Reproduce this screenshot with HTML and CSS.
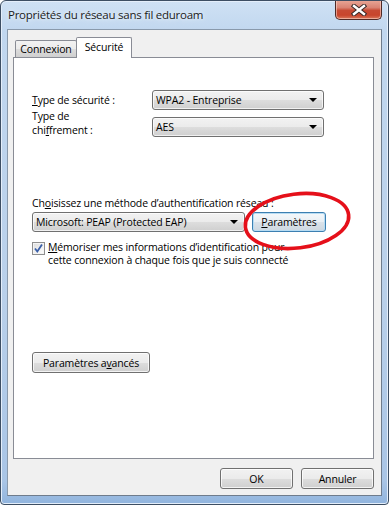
FILE: index.html
```html
<!DOCTYPE html>
<html lang="fr">
<head>
<meta charset="utf-8">
<title>Propriétés du réseau sans fil eduroam</title>
<link rel="stylesheet" href="styles.css">
</head>
<body>
<div class="window">
  <div class="titlebar">
    <span class="title">Propriétés du réseau sans fil eduroam</span>
    <div class="close">
      <svg width="16" height="12" viewBox="0 0 16 12">
        <path d="M3 2 L13 10 M13 2 L3 10" stroke="#3a2a28" stroke-width="4.4" stroke-linecap="square" fill="none"/>
        <path d="M3 2 L13 10 M13 2 L3 10" stroke="#ffffff" stroke-width="2.4" stroke-linecap="square" fill="none"/>
      </svg>
    </div>
  </div>
  <div class="client">
    <div class="tabs">
      <div class="tab">Connexion</div>
      <div class="tab active">Sécurité</div>
    </div>
    <div class="panel">
      <div class="row row1">
        <span class="label"><u>T</u>ype de sécurité :</span>
        <div class="combo wide"><span>WPA2 - Entreprise</span><i class="arrow"></i></div>
      </div>
      <div class="row row2">
        <span class="label two">Type de<br>chi<u>f</u>frement :</span>
        <div class="combo wide"><span>AES</span><i class="arrow"></i></div>
      </div>
      <div class="method-label">Ch<u>o</u>isissez une méthode d’authentification réseau :</div>
      <div class="row row4">
        <div class="combo method"><span>Microsoft: PEAP (Protected EAP)</span><i class="arrow"></i></div>
        <div class="btn focus params"><u>P</u>aramètres</div>
      </div>
      <div class="check-row">
        <span class="checkbox">
          <svg width="11" height="11" viewBox="0 0 11 11"><path d="M2 5.5 L4.3 8.5 L9 1.5" stroke="#3a5fa8" stroke-width="1.8" fill="none"/></svg>
        </span>
        <span class="check-text"><u>M</u>émoriser mes informations d’identification pour<br>cette connexion à chaque fois que je suis connecté</span>
      </div>
      <div class="btn advanced">Paramètres a<u>v</u>ancés</div>
    </div>
    <div class="footer">
      <div class="btn footer-btn">OK</div>
      <div class="btn footer-btn">Annuler</div>
    </div>
  </div>
  <svg class="annotation" width="389" height="505" viewBox="0 0 389 505">
    <ellipse cx="297" cy="221" rx="52" ry="27" transform="rotate(-7 297 221)" fill="none" stroke="#e5101a" stroke-width="3.6"/>
  </svg>
</div>
</body>
</html>
```
FILE: styles.css
```css
html, body {
  margin: 0;
  padding: 0;
  background: #ffffff;
}
body {
  font-family: "Open Sans", "Noto Sans", "DejaVu Sans", sans-serif;
  font-size: 10.5px;
  letter-spacing: -0.15px;
  color: #000;
}
u {
  text-decoration: underline;
  text-underline-offset: 1px;
}
.window {
  position: relative;
  width: 389px;
  height: 505px;
  box-sizing: border-box;
  border: 1px solid #3d4e63;
  border-radius: 6px 6px 4px 4px;
  background: linear-gradient(to bottom, #cfe1f4 0px, #c1d7ef 30px, #b9d0ea 300px, #a9c5e6 480px, #8fb3dd 505px);
  box-shadow: inset 0 0 0 1px #e4eefa;
  display: flex;
  flex-direction: column;
  overflow: hidden;
}
.titlebar {
  height: 28px;
  display: flex;
  justify-content: space-between;
  align-items: flex-start;
  padding-left: 7px;
  padding-right: 6px;
}
.title {
  font-size: 11.5px;
  letter-spacing: -0.25px;
  color: #1b1b1b;
  margin-top: 6px;
  text-shadow: 0 0 6px #e8f2fc, 0 0 3px #e8f2fc;
}
.close {
  width: 45px;
  height: 19px;
  margin-top: -1px;
  border: 1px solid #4f2a26;
  border-top: none;
  border-radius: 0 0 5px 5px;
  background: linear-gradient(to bottom, #e9a898 0%, #d98373 40%, #c74a33 55%, #c8452c 80%, #d9785c 100%);
  box-shadow: inset 0 0 0 1px rgba(255,220,210,0.55);
  display: flex;
  align-items: center;
  justify-content: center;
}
.client {
  height: 467px;
  margin: 0 6px;
  box-sizing: border-box;
  border: 1px solid #8999ab;
  border-right-color: #6f7c8c;
  border-bottom-color: #6f7c8c;
  background: #f0f0f0;
  padding: 7px 7px 0 5px;
  display: flex;
  flex-direction: column;
}
.tabs {
  display: flex;
  align-items: flex-end;
  height: 20px;
  padding-left: 2px;
  position: relative;
  z-index: 1;
}
.tab {
  box-sizing: border-box;
  height: 17px;
  border: 1px solid #898c95;
  border-bottom: none;
  border-radius: 2px 2px 0 0;
  background: linear-gradient(to bottom, #f2f2f2 0%, #ebebeb 50%, #dddddd 51%, #cfcfcf 100%);
  padding: 0 2px;
  width: 62px;
  line-height: 16px;
  text-align: center;
  white-space: nowrap;
}
.tab.active {
  height: 21px;
  width: 56px;
  margin-left: -1px;
  margin-bottom: -1px;
  background: #ffffff;
  line-height: 18px;
}
.panel {
  box-sizing: border-box;
  height: 402px;
  border: 1px solid #898c95;
  background: #ffffff;
  padding-left: 18px;
  display: flex;
  flex-direction: column;
  align-items: flex-start;
}
.row {
  display: flex;
  height: 20px;
  align-items: center;
}
.row1 {
  margin-top: 32px;
}
.row2 {
  margin-top: 7px;
  align-items: flex-end;
}
.label {
  width: 120px;
  white-space: nowrap;
}
.label.two {
  line-height: 14px;
}
.combo {
  box-sizing: border-box;
  height: 20px;
  border: 1px solid #707070;
  border-radius: 3px;
  background: linear-gradient(to bottom, #f2f2f2 0%, #ebebeb 50%, #dddddd 51%, #cfcfcf 100%);
  display: flex;
  align-items: center;
  justify-content: space-between;
  padding: 0 6px 0 3px;
  box-shadow: inset 0 0 0 1px rgba(255,255,255,0.7);
  white-space: nowrap;
}
.combo.wide {
  width: 172px;
}
.arrow {
  width: 0;
  height: 0;
  border-left: 4px solid transparent;
  border-right: 4px solid transparent;
  border-top: 4px solid #000;
}
.method-label {
  margin-top: 59px;
  line-height: 14px;
  white-space: nowrap;
}
.row4 {
  margin-top: 2px;
  gap: 7px;
}
.combo.method {
  width: 213px;
}
.btn {
  box-sizing: border-box;
  height: 21px;
  border: 1px solid #707070;
  border-radius: 3px;
  background: linear-gradient(to bottom, #f2f2f2 0%, #ebebeb 50%, #dddddd 51%, #cfcfcf 100%);
  box-shadow: inset 0 0 0 1px rgba(255,255,255,0.75);
  display: flex;
  align-items: center;
  justify-content: center;
  white-space: nowrap;
}
.btn.focus {
  border-color: #3c7fb1;
  background: linear-gradient(to bottom, #f4f8fb 0%, #e9eff4 50%, #dbe3ea 51%, #cdd7e0 100%);
  box-shadow: inset 0 0 0 1px #b7dcf3;
}
.params {
  width: 74px;
  height: 20px;
}
.check-row {
  margin-top: 9px;
  display: flex;
  align-items: flex-start;
}
.checkbox {
  box-sizing: border-box;
  width: 13px;
  height: 13px;
  margin-top: 1px;
  border: 1px solid #8f8f8f;
  background: linear-gradient(135deg, #dcdcdc, #ffffff);
  box-shadow: inset 0 0 0 1px #f4f4f4;
  display: flex;
  align-items: center;
  justify-content: center;
  margin-right: 3px;
}
.check-text {
  line-height: 13px;
}
.advanced {
  margin-top: 85px;
  width: 118px;
}
.footer {
  display: flex;
  justify-content: flex-end;
  gap: 8px;
  margin-top: 9px;
}
.footer-btn {
  width: 73px;
}
.annotation {
  position: absolute;
  left: -1px;
  top: -1px;
  pointer-events: none;
}
```
